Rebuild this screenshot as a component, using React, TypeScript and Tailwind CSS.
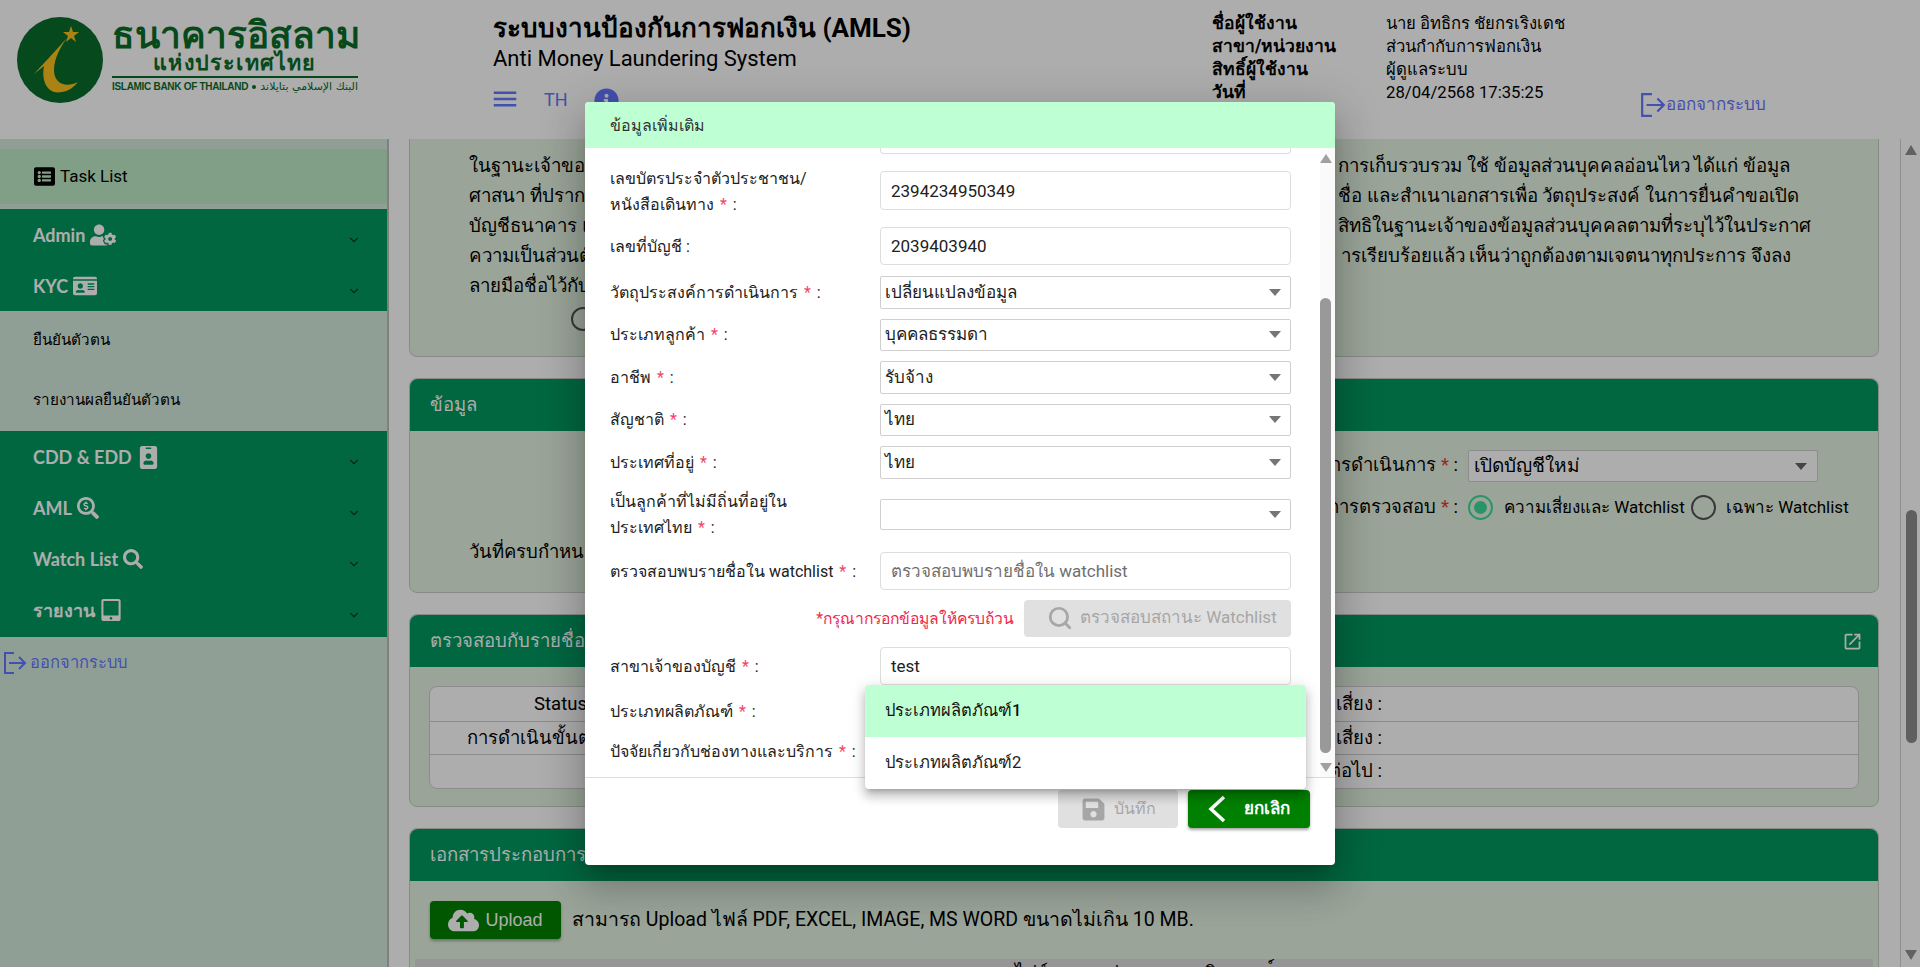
import React from 'react';
import { ChevronDown, Search } from 'lucide-react';
import {
  FaListAlt,
  FaUserCog,
  FaIdCard,
  FaIdBadge,
  FaSearchDollar,
  FaSearch,
  FaTabletAlt,
  FaInfoCircle,
  FaSave,
  FaCloudUploadAlt,
} from 'react-icons/fa';
import { MdMenu, MdOpenInNew } from 'react-icons/md';

const sans = "font-['Roboto','Noto_Sans',sans-serif]";

const paragraph = [
  { left: 'ในฐานะเจ้าของข้อมูล', right: 'การเก็บรวบรวม ใช้ ข้อมูลส่วนบุคคลอ่อนไหว ได้แก่ ข้อมูล', mr: 'mr-[88px]' },
  { left: 'ศาสนา ที่ปรากฏในบัตร', right: 'ชื่อ และสำเนาเอกสารเพื่อ วัตถุประสงค์ ในการยื่นคำขอเปิด', mr: 'mr-[79px]' },
  { left: 'บัญชีธนาคาร และรับทราบ', right: 'สิทธิในฐานะเจ้าของข้อมูลส่วนบุคคลตามที่ระบุไว้ในประกาศ', mr: 'mr-[67px]' },
  { left: 'ความเป็นส่วนตัวของธนาคาร', right: 'ารเรียบร้อยแล้ว เห็นว่าถูกต้องตามเจตนาทุกประการ จึงลง', mr: 'mr-[87px]' },
  { left: 'ลายมือชื่อไว้กับธนาคาร', right: '', mr: '' },
];

function Logo() {
  return (
    <div className="flex items-start gap-[4px] pl-[16px] pt-[16px]">
      <svg width="92" height="88" viewBox="0 0 92 88" className="shrink-0">
        <ellipse cx="44" cy="44" rx="43" ry="43" fill="#096c2a" />
        <path d="M51 22 C40 34 33 42 18 58 L28 50 C25 66 32 79 46 76 C53 75 58 71 62 66 C50 72 38 68 38 54 C38 42 45 30 51 22 Z" fill="#fcc11f" />
        <path d="M55 10 L57 16 L63 16 L58 20 L60 26 L55 22 L50 26 L52 20 L47 16 L53 16 Z" fill="#fcc11f" />
      </svg>
      <div className="w-[246px] text-[#0a6d29] text-center">
        <div className="text-[37px] leading-[35px] font-bold whitespace-nowrap font-['Noto_Sans',sans-serif]">ธนาคารอิสลาม</div>
        <div className="text-[21.5px] leading-[22px] font-bold tracking-[1.2px] whitespace-nowrap font-['Noto_Sans',sans-serif]">แห่งประเทศไทย</div>
        <div className="mt-[3px] border-t-2 border-[#0a6d29] flex items-center justify-between pt-[2px] whitespace-nowrap">
          <span className="text-[10px] leading-[14px] font-bold font-['Liberation_Sans',sans-serif] tracking-[-0.3px]">ISLAMIC BANK OF THAILAND</span>
          <span className="w-[4px] h-[4px] rounded-full bg-[#0a6d29]" />
          <span className="text-[11px] leading-[14px] font-['DejaVu_Sans',sans-serif]">البنك الإسلامي بتايلاند</span>
        </div>
      </div>
    </div>
  );
}

function LogoutIcon({ className }: { className: string }) {
  return (
    <svg viewBox="0 0 24 24" className={className} fill="none" stroke="#6477ff" strokeWidth="2">
      <path d="M11 2 H2 V22 H11" />
      <path d="M6 12 H22 M16 6 L22 12 L16 18" />
    </svg>
  );
}

function Header() {
  return (
    <header className="h-[139px] flex shrink-0 bg-white">
      <div className="w-[493px] shrink-0">
        <Logo />
      </div>
      <div className="w-[719px] shrink-0 pt-[12px]">
        <div className="text-[26px] leading-[32px] font-bold text-black whitespace-nowrap">ระบบงานป้องกันการฟอกเงิน (AMLS)</div>
        <div className="text-[22px] leading-[30px] text-black whitespace-nowrap">Anti Money Laundering System</div>
        <div className="flex items-center mt-[10px] text-[#6477ff]">
          <MdMenu size={30} className="-ml-[3px]" />
          <span className="ml-[24px] text-[18px]">TH</span>
          <FaInfoCircle size={25} className="ml-[26px] mt-[2px]" />
        </div>
      </div>
      <div className="w-[174px] shrink-0 pt-[12px] text-[17.5px] leading-[23px] font-bold text-black whitespace-nowrap">
        <div>ชื่อผู้ใช้งาน</div>
        <div>สาขา/หน่วยงาน</div>
        <div>สิทธิ์ผู้ใช้งาน</div>
        <div>วันที่</div>
      </div>
      <div className="w-[254px] shrink-0 pt-[12px] text-[16.7px] leading-[23px] text-black whitespace-nowrap">
        <div>นาย อิทธิกร ชัยกรเริงเดช</div>
        <div>ส่วนกำกับการฟอกเงิน</div>
        <div>ผู้ดูแลระบบ</div>
        <div>28/04/2568 17:35:25</div>
      </div>
      <div className="flex items-center h-[26px] mt-[92px] text-[#6477ff] text-[17px] whitespace-nowrap">
        <LogoutIcon className="w-[26px] h-[26px]" />
        <span>ออกจากระบบ</span>
      </div>
    </header>
  );
}

function NavItem({ label, icon }: { label: string; icon: React.ReactNode }) {
  return (
    <div className="h-[51px] flex items-center justify-between pl-[33px] pr-[26px] text-white">
      <div className="flex items-center gap-[5px] pt-[1px] text-[18px] font-bold font-['Lato',sans-serif] whitespace-nowrap">
        {label}
        {icon}
      </div>
      <ChevronDown size={14} className="text-[#0b3a24] mt-[10px]" />
    </div>
  );
}

function Sidebar() {
  return (
    <aside className="w-[389px] shrink-0 bg-[#d5ebde] border-r-2 border-[#bdbdbd]">
      <div className="pt-[10px]">
        <div className="h-[55px] bg-[#bfeac8] flex items-center pl-[34px] gap-[5px] text-black text-[17px]">
          <FaListAlt size={21} />
          Task List
        </div>
      </div>
      <div className="mt-[5px] bg-[#009960]">
        <NavItem label="Admin" icon={<FaUserCog size={26} />} />
        <NavItem label="KYC" icon={<FaIdCard size={24} />} />
      </div>
      <div className="h-[120px] text-[15.25px] text-black pl-[33px] flex flex-col">
        <div className="h-[59px] flex items-center">ยืนยันตัวตน</div>
        <div className="h-[61px] flex items-center">รายงานผลยืนยันตัวตน</div>
      </div>
      <div className="bg-[#009960] pb-[2px]">
        <NavItem label="CDD & EDD" icon={<FaIdBadge size={23} />} />
        <NavItem label="AML" icon={<FaSearchDollar size={22} />} />
        <NavItem label="Watch List" icon={<FaSearch size={20} />} />
        <NavItem label="รายงาน" icon={<FaTabletAlt size={22} />} />
      </div>
      <div className="flex items-center pl-[3px] pt-[14px] text-[16.5px] text-[#6477ff] whitespace-nowrap">
        <LogoutIcon className="w-[24px] h-[24px]" />
        <span className="ml-[3px]">ออกจากระบบ</span>
      </div>
    </aside>
  );
}

function PanelHead({ title, action }: { title: string; action?: React.ReactNode }) {
  return (
    <div className="h-[52px] rounded-t-[8px] bg-[#009960] flex items-center justify-between pl-[20px] pr-[15px] pt-[1px] text-white text-[18.5px]">
      {title}
      {action}
    </div>
  );
}

function Main() {
  return (
    <div className={`flex-1 min-w-0 pl-[20px] pr-[21px] overflow-hidden text-[18.5px] text-black ${sans}`}>
      <section className="h-[218px] bg-[#e3f2e1] border border-t-0 border-[#c8cfc7] rounded-b-[8px] pl-[59px] pt-[12px] text-[18.7px]">
        {paragraph.map((line) => (
          <div key={line.left} className="h-[30px] leading-[30px] flex justify-between whitespace-nowrap">
            <span>{line.left}</span>
            <span className={line.mr}>{line.right}</span>
          </div>
        ))}
        <div className="ml-[102px] mt-[6px] w-[24px] h-[24px] rounded-full border-2 border-[#555]" />
      </section>

      <section className="h-[215px] mt-[21px] bg-[#e3f2e1] border border-[#c8cfc7] rounded-[8px]">
        <PanelHead title="ข้อมูล" />
        <div className="pt-[19px] pl-[59px]">
          <div className="flex justify-end items-center h-[32px]">
            <span className="mr-[10px]">ประเภทการดำเนินการ <span className="text-[#e53935]">*</span> :</span>
            <div className="w-[350px] mr-[60px] h-[32px] bg-white border border-[#cfcfcf] rounded-[2px] flex items-center justify-between pl-[5px] pr-[10px] text-[19px]">
              เปิดบัญชีใหม่
              <span className="w-0 h-0 border-x-[6px] border-x-transparent border-t-[7px] border-t-[#666]" />
            </div>
          </div>
          <div className="flex justify-end items-center mt-[13px] h-[25px]">
            <span className="mr-[10px]">ประเภทการตรวจสอบ <span className="text-[#e53935]">*</span> :</span>
            <div className="w-[410px] flex items-center text-[17px] whitespace-nowrap">
              <span className="w-[25px] h-[25px] rounded-full border-2 border-[#3ddc97] flex items-center justify-center">
                <span className="w-[13px] h-[13px] rounded-full bg-[#3ddc97]" />
              </span>
              <span className="ml-[11px] w-[187px]">ความเสี่ยงและ Watchlist</span>
              <span className="w-[25px] h-[25px] rounded-full border-2 border-[#555]" />
              <span className="ml-[10px]">เฉพาะ Watchlist</span>
            </div>
          </div>
          <div className="mt-[19px]">วันที่ครบกำหนด</div>
        </div>
      </section>

      <section className="h-[193px] mt-[21px] bg-[#e3f2e1] border border-[#c8cfc7] rounded-[8px]">
        <PanelHead title="ตรวจสอบกับรายชื่อ Watchlist" action={<MdOpenInNew size={21} />} />
        <div className="mx-[19px] mt-[19px] bg-white border border-[#cfcfcf] rounded-[8px]">
          {[
            ['Status :', 'ระดับความเสี่ยง :', 'pr-[35px]'],
            ['การดำเนินขั้นต่อไป :', 'คะแนนความเสี่ยง :', ''],
            ['', 'ดำเนินการต่อไป :', ''],
          ].map(([a, b, pad], i) => (
            <div key={b} className={`h-[33.5px] flex items-center pt-[2px] whitespace-nowrap ${i > 0 ? 'border-t border-[#cfcfcf]' : ''}`}>
              <span className={`w-[201px] text-right ${pad}`}>{a}</span>
              <span className="w-[751px] text-right">{b}</span>
            </div>
          ))}
        </div>
      </section>

      <section className="mt-[21px] bg-[#e3f2e1] border border-[#c8cfc7] rounded-t-[8px] h-[160px]">
        <PanelHead title="เอกสารประกอบการพิจารณา" />
        <div className="flex items-center pl-[20px] pt-[20px]">
          <button className="w-[131px] h-[38px] rounded-[4px] bg-[#008000] text-white text-[18px] flex items-center justify-center gap-[6px] shadow-[0_2px_3px_rgba(0,0,0,0.3)] font-['Liberation_Sans',sans-serif]">
            <FaCloudUploadAlt size={31} />
            Upload
          </button>
          <span className="ml-[11px] whitespace-nowrap text-[19.5px]">สามารถ Upload ไฟล์ PDF, EXCEL, IMAGE, MS WORD ขนาดไม่เกิน 10 MB.</span>
        </div>
        <div className="ml-[5px] mr-[5px] mt-[20px] h-[40px] bg-[#dedede] text-center pt-[1px] whitespace-nowrap">ไฟล์เอกสารประกอบการพิจารณา์</div>
      </section>
    </div>
  );
}

function PageScrollbar() {
  return (
    <div className="w-[20px] shrink-0 bg-white border-l border-[#d4d4d4] flex flex-col items-center">
      <span className="mt-[6px] w-0 h-0 border-x-[6px] border-x-transparent border-b-[10px] border-b-[#909090]" />
      <span className="mt-[355px] w-[11px] h-[233px] rounded-full bg-[#8d8d8d] ml-[2px]" />
      <span className="mt-auto mb-[7px] w-0 h-0 border-x-[6px] border-x-transparent border-t-[10px] border-t-[#909090]" />
    </div>
  );
}

function Required() {
  return <span className="text-[#f44369] mx-[2px]"> * </span>;
}

function Field({ label, value, placeholder }: { label: React.ReactNode; value?: string; placeholder?: string }) {
  return (
    <>
      <div className="w-[270px] shrink-0 leading-[26px] pt-[2px]">{label}</div>
      <div className="w-[411px] h-full border border-[#dddddd] rounded-[4px] flex items-center pl-[10px] pt-[2px] text-[17px]">
        {value || <span className="text-[#6f6f6f]">{placeholder}</span>}
      </div>
    </>
  );
}

function Choice({ label, value }: { label: React.ReactNode; value?: string }) {
  return (
    <>
      <div className="w-[270px] shrink-0 leading-[26px] pt-[1px]">{label}</div>
      <div className="w-[411px] h-full border border-[#cfcfcf] rounded-[2px] flex items-center justify-between pl-[4px] pr-[9px] text-[17px]">
        <span>{value}</span>
        <span className="w-0 h-0 border-x-[6px] border-x-transparent border-t-[7px] border-t-[#757575]" />
      </div>
    </>
  );
}

function Modal() {
  const selects = [
    ['วัตถุประสงค์การดำเนินการ', 'เปลี่ยนแปลงข้อมูล'],
    ['ประเภทลูกค้า', 'บุคคลธรรมดา'],
    ['อาชีพ', 'รับจ้าง'],
    ['สัญชาติ', 'ไทย'],
    ['ประเทศที่อยู่', 'ไทย'],
  ];
  return (
    <div className={`absolute left-[585px] top-[102px] w-[750px] h-[763px] bg-white rounded-[4px] flex flex-col text-[16px] text-[#212121] shadow-[0_11px_15px_-7px_rgba(0,0,0,0.2),0_24px_38px_3px_rgba(0,0,0,0.14),0_9px_46px_8px_rgba(0,0,0,0.12)] ${sans}`}>
      <div className="h-[46px] shrink-0 bg-[#bfffd4] rounded-t-[4px] flex items-center pl-[25px] pt-[1px] font-medium text-[#333]">ข้อมูลเพิ่มเติม</div>

      <div className="h-[629px] flex overflow-hidden">
        <div className="w-[735px] shrink-0 pl-[25px] flex flex-col">
          <div className="ml-[270px] w-[411px] h-[6px] shrink-0 border border-t-0 border-[#dddddd] rounded-b-[4px]" />
          <div className="flex items-center h-[39px] mt-[17px] shrink-0">
            <Field
              label={<>เลขบัตรประจำตัวประชาชน/<br />หนังสือเดินทาง<Required />:</>}
              value="2394234950349"
            />
          </div>
          <div className="flex items-center h-[38px] mt-[17px] shrink-0">
            <Field label="เลขที่บัญชี :" value="2039403940" />
          </div>
          <div className="flex flex-col gap-[10px] mt-[11px]">
            {selects.map(([label, value]) => (
              <div key={label} className="flex items-center h-[32.5px] shrink-0">
                <Choice label={<>{label}<Required />:</>} value={value} />
              </div>
            ))}
          </div>
          <div className="flex items-center h-[31px] mt-[20px] shrink-0">
            <Choice label={<>เป็นลูกค้าที่ไม่มีถิ่นที่อยู่ใน<br />ประเทศไทย<Required />:</>} />
          </div>
          <div className="flex items-center h-[38px] mt-[22px] shrink-0">
            <Field label={<>ตรวจสอบพบรายชื่อใน watchlist<Required />:</>} placeholder="ตรวจสอบพบรายชื่อใน watchlist" />
          </div>
          <div className="flex items-center justify-end h-[37px] mt-[10px] shrink-0 pr-[29px]">
            <span className="text-[#f0284a] text-[15.7px] mr-[10px] pt-[1px] whitespace-nowrap">*กรุณากรอกข้อมูลให้ครบถ้วน</span>
            <button className="w-[267px] h-full rounded-[4px] bg-[#e0e0e0] text-[#a6a6a6] flex items-center pl-[23px] gap-[7px] text-[17px] whitespace-nowrap">
              <Search size={26} strokeWidth={2.5} />
              ตรวจสอบสถานะ Watchlist
            </button>
          </div>
          <div className="flex items-center h-[38px] mt-[10px] shrink-0">
            <Field label={<>สาขาเจ้าของบัญชี<Required />:</>} value="test" />
          </div>
          <div className="flex items-center h-[40px] mt-[7px] shrink-0">
            <Choice label={<>ประเภทผลิตภัณฑ์<Required />:</>} />
          </div>
          <div className="flex items-center h-[40px] shrink-0">
            <Choice label={<>ปัจจัยเกี่ยวกับช่องทางและบริการ<Required />:</>} />
          </div>
        </div>
        <div className="w-[15px] flex flex-col items-start bg-[#fafafa]">
          <span className="mt-[6px] w-0 h-0 border-x-[6px] border-x-transparent border-b-[9px] border-b-[#a0a0a0]" />
          <span className="mt-[135px] w-[11px] h-[455px] rounded-full bg-[#999999]" />
          <span className="mt-[10px] w-0 h-0 border-x-[6px] border-x-transparent border-t-[9px] border-t-[#a0a0a0]" />
        </div>
      </div>

      <div className="border-t border-[#dedede] flex justify-end gap-[10px] pt-[12px] pr-[25px]">
        <button className="w-[120px] h-[38px] rounded-[4px] bg-[#e0e0e0] text-[#a6a6a6] flex items-center pl-[23px] gap-[8px]">
          <FaSave size={25} />
          บันทึก
        </button>
        <button className="w-[122px] h-[38px] rounded-[4px] bg-[#008000] text-white text-[17px] font-bold flex items-center justify-between px-[20px] shadow-[0_2px_3px_rgba(0,0,0,0.35)]">
          <svg width="18" height="28" viewBox="0 0 18 28" fill="none" stroke="white" strokeWidth="3.5"><path d="M16 2 L3 14 L16 26" /></svg>
          ยกเลิก
        </button>
      </div>

      <div className="absolute left-[280px] top-[583px] w-[441px] bg-white rounded-[4px] text-[16.5px] shadow-[0_5px_5px_-3px_rgba(0,0,0,0.2),0_8px_10px_1px_rgba(0,0,0,0.14),0_3px_14px_2px_rgba(0,0,0,0.12)]">
        <div className="h-[52px] bg-[#bfffd4] rounded-t-[4px] flex items-center pl-[20px] font-medium text-[#111]">ประเภทผลิตภัณฑ์1</div>
        <div className="h-[52px] flex items-center pl-[20px]">ประเภทผลิตภัณฑ์2</div>
      </div>
    </div>
  );
}

export default function App() {
  return (
    <div className={`relative w-[1920px] h-[967px] overflow-hidden bg-white flex flex-col ${sans}`}>
      <Header />
      <div className="flex flex-1 min-h-0">
        <Sidebar />
        <Main />
        <PageScrollbar />
      </div>
      {/* dialog backdrop */}
      <div className="absolute inset-0 bg-black/32" />
      <Modal />
    </div>
  );
}
